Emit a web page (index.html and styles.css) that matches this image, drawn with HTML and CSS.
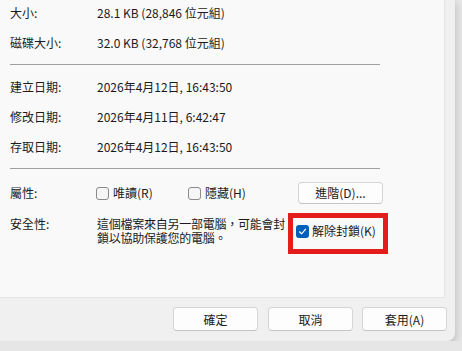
FILE: index.html
```html
<!DOCTYPE html>
<html lang="zh-Hant">
<head>
    <meta charset="UTF-8">
    <meta name="viewport" content="width=device-width, initial-scale=1.0">
    <title>內容</title>
    <link rel="stylesheet" href="styles.css">
</head>
<body>
    <div class="dialog">
        <div class="panel">
            <div class="row first">
                <div class="label">大小:</div>
                <div class="value">28.1 KB (28,846 位元組)</div>
            </div>
            <div class="row">
                <div class="label">磁碟大小:</div>
                <div class="value">32.0 KB (32,768 位元組)</div>
            </div>
            <div class="sep"></div>
            <div class="row">
                <div class="label">建立日期:</div>
                <div class="value">2026年4月12日, 16:43:50</div>
            </div>
            <div class="row">
                <div class="label">修改日期:</div>
                <div class="value">2026年4月11日, 6:42:47</div>
            </div>
            <div class="row">
                <div class="label">存取日期:</div>
                <div class="value">2026年4月12日, 16:43:50</div>
            </div>
            <div class="sep"></div>
            <div class="row attrs">
                <div class="label">屬性:</div>
                <label class="check first-check"><span class="box"></span>唯讀(R)</label>
                <label class="check"><span class="box"></span>隱藏(H)</label>
                <button class="btn adv">進階(D)...</button>
            </div>
            <div class="row security">
                <div class="label">安全性:</div>
                <div class="note">這個檔案來自另一部電腦，可能會封<br>鎖以協助保護您的電腦。</div>
                <label class="check unblock">
                    <span class="box on">
                        <svg width="9" height="9" viewBox="0 0 9 9"><path d="M1.5 4.8 L3.6 6.8 L7.6 2.2" fill="none" stroke="#fff" stroke-width="1.2" stroke-linecap="round" stroke-linejoin="round"/></svg>
                    </span>解除封鎖(K)
                </label>
            </div>
            <!-- 標示框 -->
            <div class="mark"></div>
        </div>
        <div class="footer">
            <button class="btn">確定</button>
            <button class="btn">取消</button>
            <button class="btn apply">套用(A)</button>
        </div>
    </div>
</body>
</html>
```

FILE: styles.css
```css
body{
    margin: 0;
    background: #e6e6e6;
    font-family: "Noto Sans CJK TC", "Noto Sans", sans-serif;
    font-size: 12px;
    color: #1b1b1b;
    overflow: hidden;
}
.dialog{
    width: 455px;
    height: 341px;
    background: #f0f0f0;
    border-radius: 0 0 8px 0;
    box-shadow: 0 3px 8px rgba(0, 0, 0, 0.22);
    display: flex;
    flex-direction: column;
}
.panel{
    position: relative;
    width: 445px;
    height: 298px;
    box-sizing: border-box;
    background: #f9f9f9;
    border-right: 1px solid #e3e3e3;
    border-bottom: 1px solid #e3e3e3;
    padding-left: 10px;
}
.row{
    display: flex;
    align-items: center;
    height: 16px;
    line-height: 16px;
    margin-top: 14px;
}
.row.first{
    margin-top: 5px;
}
.label{
    width: 87px;
    flex-shrink: 0;
}
.sep{
    width: 370px;
    height: 1px;
    background: #a0a0a0;
    margin-top: 13px;
}
.attrs{
    height: 22px;
    margin-top: 13px;
}
.check{
    display: flex;
    align-items: center;
    gap: 4px;
    margin-left: -1px;
}
.first-check{
    width: 93px;
}
.box{
    width: 11px;
    height: 11px;
    border: 1px solid #8b8b8b;
    border-radius: 3px;
    background: #f6f6f6;
    display: flex;
    align-items: center;
    justify-content: center;
}
.box.on{
    width: 13px;
    height: 13px;
    border: none;
    background: #005fb8;
}
.btn{
    font: inherit;
    color: #1b1b1b;
    width: 85px;
    height: 24px;
    background: #fdfdfd;
    border: 1px solid #d5d5d5;
    border-bottom-color: #c4c4c4;
    border-radius: 4px;
    padding: 0;
}
.adv{
    height: 22px;
    margin-left: auto;
    margin-right: 61px;
}
.security{
    height: auto;
    align-items: flex-start;
    margin-top: 13px;
    line-height: 14px;
}
.note{
    width: 192px;
    white-space: nowrap;
    letter-spacing: -0.25px;
}
.unblock{
    margin-left: 7px;
    margin-top: 6px;
    gap: 3px;
    line-height: 16px;
}
.mark{
    position: absolute;
    left: 288px;
    top: 213px;
    width: 90px;
    height: 31px;
    border: 5px solid #e41c1c;
}
.footer{
    display: flex;
    justify-content: flex-end;
    gap: 10px;
    padding: 9px 8px 0 0;
}
.apply{
    margin-left: -1px;
}
```
